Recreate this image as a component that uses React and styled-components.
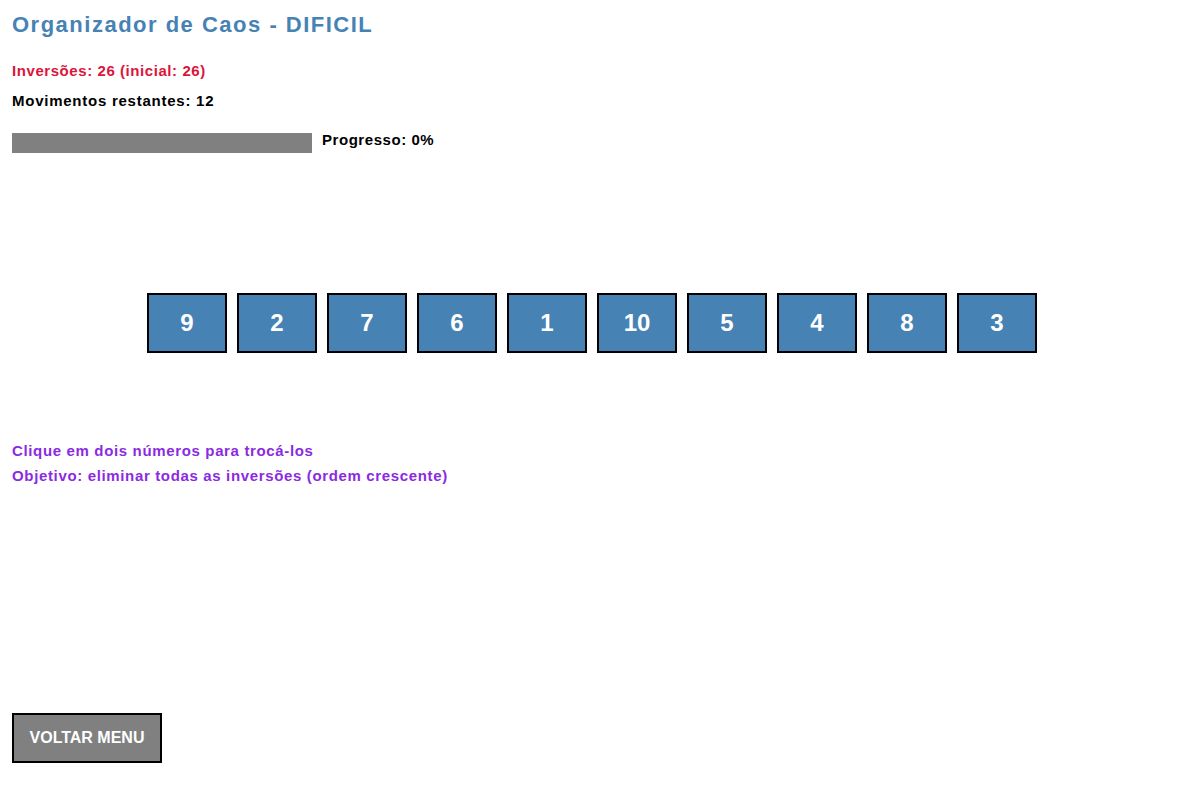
import React from 'react';
import styled, { createGlobalStyle } from 'styled-components';

const GlobalStyle = createGlobalStyle`
  html, body {
    margin: 0;
    padding: 0;
    background: #ffffff;
  }
  body {
    font-family: "Liberation Sans", Arial, sans-serif;
  }
`;

const Page = styled.div`
  box-sizing: border-box;
  width: 1186px;
  height: 791px;
  padding: 12px;
  display: flex;
  flex-direction: column;
  align-items: flex-start;
  font-weight: bold;
`;

const Title = styled.h1`
  margin: 0;
  font-size: 22px;
  line-height: 26px;
  color: #4682b4;
  letter-spacing: 1.5px;
`;

const Stat = styled.div`
  margin-top: ${(p) => p.$gap}px;
  font-size: 15px;
  line-height: 18px;
  color: ${(p) => p.$color || '#000000'};
  letter-spacing: ${(p) => p.$spacing || 0.6}px;
`;

const ProgressRow = styled.div`
  margin-top: 23px;
  display: flex;
  align-items: flex-start;
  gap: 10px;
`;

const Bar = styled.div`
  width: 300px;
  height: 20px;
  background: #808080;
`;

const Fill = styled.div`
  height: 100%;
  background: #32cd32;
`;

const ProgressLabel = styled.span`
  font-size: 15px;
  line-height: 14px;
  color: #000000;
  letter-spacing: 0.55px;
`;

const Board = styled.div`
  margin-top: 140px;
  padding-right: 2px;
  align-self: stretch;
  display: flex;
  justify-content: center;
  gap: 10px;
`;

const Tile = styled.button`
  box-sizing: border-box;
  width: 80px;
  height: 60px;
  padding: 0;
  border: 2px solid #000000;
  background: ${(p) => (p.$selected ? '#ffd700' : '#4682b4')};
  color: #ffffff;
  font-family: inherit;
  font-weight: bold;
  font-size: 24px;
  display: flex;
  align-items: center;
  justify-content: center;
  cursor: pointer;
`;

const Hint = styled.div`
  margin-top: ${(p) => p.$gap}px;
  font-size: 15px;
  line-height: 18px;
  color: #8a2be2;
  letter-spacing: 0.65px;
`;

const MenuButton = styled.button`
  margin-top: 228px;
  box-sizing: border-box;
  width: 150px;
  height: 50px;
  border: 2px solid #000000;
  background: #808080;
  color: #ffffff;
  font-family: inherit;
  font-weight: bold;
  font-size: 16px;
  cursor: pointer;
`;

const numbers = [9, 2, 7, 6, 1, 10, 5, 4, 8, 3];

export default function App() {
  const progress = 0;
  return (
    <>
      <GlobalStyle />
      <Page>
        <Title>Organizador de Caos - DIFICIL</Title>
        <Stat $gap={24} $color="#dc143c" $spacing={0.57}>Inversões: 26 (inicial: 26)</Stat>
        <Stat $gap={12} $spacing={0.75}>Movimentos restantes: 12</Stat>
        <ProgressRow>
          <Bar>
            <Fill style={{ width: `${progress}%` }} />
          </Bar>
          <ProgressLabel>Progresso: {progress}%</ProgressLabel>
        </ProgressRow>
        <Board>
          {numbers.map((n) => (
            <Tile key={n}>{n}</Tile>
          ))}
        </Board>
        <Hint $gap={89}>Clique em dois números para trocá-los</Hint>
        <Hint $gap={7}>Objetivo: eliminar todas as inversões (ordem crescente)</Hint>
        <MenuButton>VOLTAR MENU</MenuButton>
      </Page>
    </>
  );
}
